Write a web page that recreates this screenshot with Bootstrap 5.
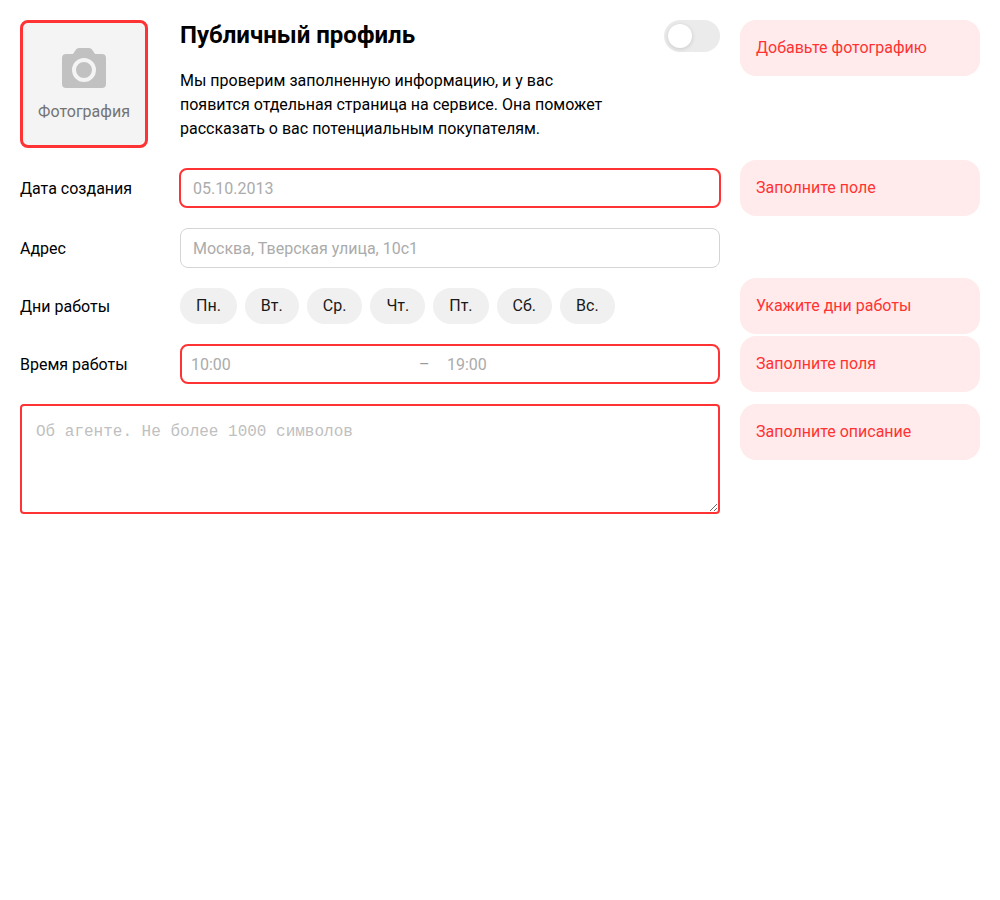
<!DOCTYPE html>
<html lang="ru">
<head>
<meta charset="utf-8">
<meta name="viewport" content="width=device-width, initial-scale=1">
<title>Публичный профиль</title>
<link href="https://cdn.jsdelivr.net/npm/bootstrap@5.3.0/dist/css/bootstrap.min.css" rel="stylesheet">
<style>
  :root { --alert: #ff3333; --alert-soft: #ffebeb; }
  body { font-family: Roboto, "Noto Sans", sans-serif; font-size: 16px; line-height: 24px; color: #000; background: #fff; }
  .profile { padding: 20px; gap: 20px; }
  .profile-row { display: grid; grid-template-columns: 140px minmax(0, 1fr) 240px; column-gap: 20px; align-items: center; }
  .profile-head { align-items: start; }
  .wide { grid-column: span 2; }
  .row-label { padding-top: 2px; }

  .photo { width: 128px; height: 128px; border: 3px solid var(--alert); border-radius: 8px; background: #f4f4f4; color: #737373; padding: 4px 0 0; gap: 12px; }
  .photo svg { width: 44px; height: 40px; }

  .profile-title { font-size: 24px; line-height: 30px; font-weight: 700; }
  .intro { max-width: 440px; margin-top: 17px; }
  .switch.form-check-input { width: 56px; height: 32px; margin: 0; padding: 4px; border: 0; border-radius: 16px; background: #ebebeb; appearance: none; }
  .switch::before { content: ""; display: block; width: 24px; height: 24px; border-radius: 50%; background: #fff; box-shadow: 0 1px 4px rgba(0, 0, 0, .15); }
  .switch:checked { background: #fc0; }
  .switch:checked::before { margin-left: 24px; }

  .field.form-control { height: 40px; padding: 0 12px; border: 1px solid #d5d5d5; border-radius: 8px; color: #000; line-height: 24px; }
  .field.is-wrong { width: auto; margin: 0 -1px; border: 2px solid var(--alert); }
  .field::placeholder, .time-input::placeholder { color: #ababab; opacity: 1; }

  .day.btn { --bs-btn-bg: #f0f0f0; --bs-btn-color: #1a1a1a; --bs-btn-hover-bg: #e6e6e6; --bs-btn-border-width: 0; height: 36px; padding: 0 16px; border-radius: 18px; line-height: 24px; }

  .time-range { height: 40px; border: 2px solid var(--alert); border-radius: 8px; padding: 2px 9px 0; color: #999; }
  .time-input { flex: 1 1 0; min-width: 0; border: 0; padding: 0; background: none; outline: 0; color: #000; }
  .time-from { flex: 0 0 44%; }
  .time-dash { width: 28px; }

  .about.form-control { height: 110px; padding: 14px; border: 2px solid var(--alert); border-radius: 4px; font-family: "Liberation Mono", monospace; line-height: 24px; resize: both; }
  .about::placeholder { color: #c0c0c0; opacity: 1; }

  /* Hints are taller than the fields, so they spill evenly above and below their row */
  .hint { grid-column: 3; padding: 16px; border-radius: 16px; background: var(--alert-soft); color: var(--alert); margin: -10px 0; }
  .hint-top { margin: 0; align-self: start; }
</style>
</head>
<body>
<form class="profile d-flex flex-column">
  <div class="profile-row profile-head">
    <button type="button" class="photo d-flex flex-column align-items-center justify-content-center">
      <svg viewBox="0 0 44 40" aria-hidden="true">
        <path fill="#c1c1c1" d="M4 6h7l3-4.500Q15 0 17 0h10q2 0 3 1.500L33 6h7q4 0 4 4v26q0 4-4 4H4q-4 0-4-4V10q0-4 4-4z"/>
        <circle cx="22" cy="22" r="10" fill="#c1c1c1" stroke="#f4f4f4" stroke-width="4"/>
      </svg>
      <span>Фотография</span>
    </button>
    <div>
      <div class="d-flex justify-content-between">
        <h1 class="profile-title mb-0" id="title">Публичный профиль</h1>
        <input type="checkbox" role="switch" class="form-check-input switch flex-shrink-0" aria-labelledby="title">
      </div>
      <p class="intro mb-0">Мы проверим заполненную информацию, и у вас появится отдельная страница на сервисе. Она поможет рассказать о вас потенциальным покупателям.</p>
    </div>
    <div class="hint hint-top">Добавьте фотографию</div>
  </div>

  <div class="profile-row">
    <label class="row-label" for="created">Дата создания</label>
    <input id="created" type="text" class="form-control field is-wrong" placeholder="05.10.2013">
    <div class="hint">Заполните поле</div>
  </div>

  <div class="profile-row">
    <label class="row-label" for="address">Адрес</label>
    <input id="address" type="text" class="form-control field" placeholder="Москва, Тверская улица, 10с1">
  </div>

  <div class="profile-row">
    <span class="row-label" id="days">Дни работы</span>
    <div class="d-flex flex-wrap gap-2" role="group" aria-labelledby="days">
      <button type="button" class="btn day">Пн.</button>
      <button type="button" class="btn day">Вт.</button>
      <button type="button" class="btn day">Ср.</button>
      <button type="button" class="btn day">Чт.</button>
      <button type="button" class="btn day">Пт.</button>
      <button type="button" class="btn day">Сб.</button>
      <button type="button" class="btn day">Вс.</button>
    </div>
    <div class="hint">Укажите дни работы</div>
  </div>

  <div class="profile-row">
    <label class="row-label" for="from">Время работы</label>
    <div class="time-range d-flex align-items-center">
      <input id="from" type="text" class="time-input time-from" placeholder="10:00">
      <span class="time-dash">–</span>
      <input type="text" class="time-input" placeholder="19:00" aria-label="Время окончания работы">
    </div>
    <div class="hint">Заполните поля</div>
  </div>

  <div class="profile-row">
    <textarea class="form-control about wide" aria-label="Об агенте" placeholder="Об агенте. Не более 1000 символов"></textarea>
    <div class="hint hint-top">Заполните описание</div>
  </div>
</form>
<script src="https://cdn.jsdelivr.net/npm/bootstrap@5.3.0/dist/js/bootstrap.bundle.min.js"></script>
</body>
</html>
